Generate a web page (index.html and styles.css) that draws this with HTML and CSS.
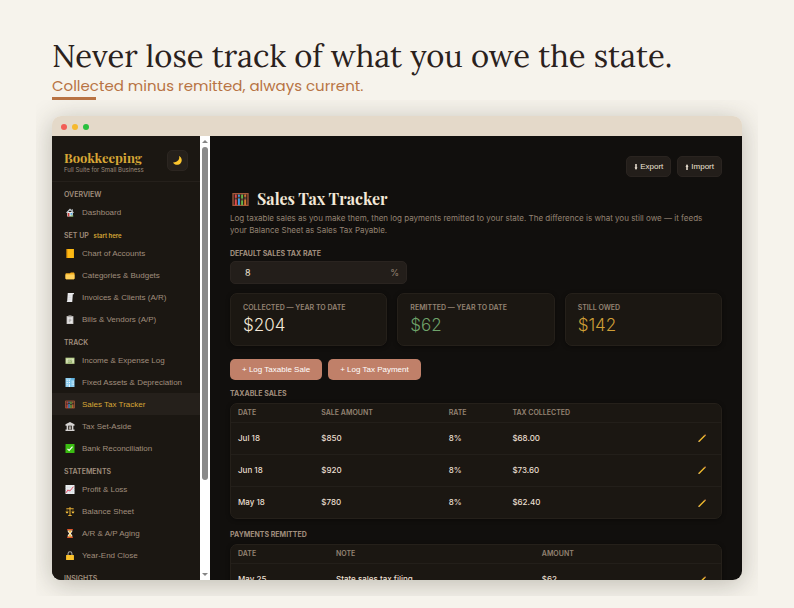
FILE: index.html
```html
<!DOCTYPE html>
<html lang="en">
<head>
    <meta charset="UTF-8">
    <meta name="viewport" content="width=device-width, initial-scale=1.0">
    <title>Sales Tax Tracker - Bookkeeping</title>
    <link rel="stylesheet" href="styles.css">
</head>
<body>
    <!-- Shared icons -->
    <svg class="sprite" aria-hidden="true">
        <symbol id="moon" viewBox="0 0 16 16"><path d="M10 1.500c2 4-1.500 9.500-8.500 9.300 2 4 8 4.700 11 1.200 3-3.500 1.800-8.500-2.500-10.500z" fill="#fcc62d"/></symbol>
        <symbol id="house" viewBox="0 0 16 16"><path d="M3 7h10v8H3z" fill="#e9edf0"/><path d="M8 1l7 7-1.500 1L8 4.500 2.500 9 1 8z" fill="#c9cfd4"/><path d="M4 9h3v6H4z" fill="#c8413b"/><path d="M9 9h3v3H9z" fill="#4ba9e0"/><path d="M11 2h2v4l-2-2z" fill="#b9c0c5"/><path d="M9 13.500h5V15H9z" fill="#69a84f"/></symbol>
        <symbol id="ledger" viewBox="0 0 16 16"><path d="M2 0h13v16H2z" fill="#fdb913"/><path d="M2 0h2v16H2z" fill="#e8990c"/></symbol>
        <symbol id="folder" viewBox="0 0 16 16"><path d="M0 13.500V5l1-1h7l1.500-1.500H15L16 4v9.500l-1 1H1z" fill="#f4ae20"/><path d="M0 6h16v7.500l-1 1H1l-1-1z" fill="#ffd15c"/></symbol>
        <symbol id="receipt" viewBox="0 0 16 16"><path d="M4 0h11v2h-2l-1 14H2l1-2z" fill="#e9e9eb"/><path d="M5.500 5h5M5.300 8h5M5 11h5" stroke="#d0d0d4" stroke-width="1"/></symbol>
        <symbol id="clipboard" viewBox="0 0 16 16"><path d="M2 2h12v14H2z" fill="#cfccc9"/><path d="M4 4h8v10H4z" fill="#eee"/><path d="M5 1h2l1-1 1 1h2v3H5z" fill="#a8a5a2"/><path d="M5.500 7.500h5M5.500 10h5M5.500 12h3" stroke="#77736f" stroke-width="1"/></symbol>
        <symbol id="cash" viewBox="0 0 16 16"><path d="M0 3h16v11H0z" fill="#b9d18b"/><path d="M1.500 5h13v7h-13z" fill="#e3ebc6"/><path d="M4 6.500h8V12H4z" fill="#86a35e"/><path d="M5.500 11V8h2v3m2 0V8H11" stroke="#e3ebc6" fill="none"/></symbol>
        <symbol id="building" viewBox="0 0 16 16"><path d="M0 0h16v16H0z" fill="#8fcff0"/><path d="M10 0h6v3h-6z" fill="#59afe0"/><path d="M2 3h2v2H2zM6 3h2v2H6zM2 7h2v2H2zM6 7h2v2H6zM2 11h2v2H2z" fill="#effaff"/><path d="M11 6h1.500v2H11zM13.500 6H15v2h-1.500zM11 10h1.500v2H11zM13.500 10H15v2h-1.500zM6 11h2v5H6z" fill="#e5f6ff"/><path d="M9.500 3v13" stroke="#59afe0"/></symbol>
        <symbol id="abacus" viewBox="0 0 18 16"><path d="M1 1.700h16v12.600H1z" fill="#342118" stroke="#a4573a" stroke-width="1.400"/><path d="M4 2v12M7.300 2v12M10.700 2v12M14 2v12" stroke="#998a80" stroke-width=".6"/><path d="M4 3v3M4 8v6" stroke="#e1484c" stroke-width="2"/><path d="M7.300 3v2M7.300 7v7" stroke="#3c9be8" stroke-width="2"/><path d="M10.700 3v4M10.700 9v5" stroke="#63b447" stroke-width="2"/><path d="M14 3v2M14 8v6" stroke="#d6782e" stroke-width="2"/></symbol>
        <symbol id="bank" viewBox="0 0 16 16"><path d="M8 0l8 4v2.500H0V4zM2 6h2.500v8H2zM11.500 6H14v8h-2.500zM0 13.500h16V16H0z" fill="#d5d3d1"/><path d="M5 7h6v6.500H5z" fill="#59534e"/><path d="M6.500 8h3v5.500h-3z" fill="#b6b2ae"/></symbol>
        <symbol id="check" viewBox="0 0 16 16"><rect width="16" height="16" rx="1" fill="#3bbd12"/><path d="M3.500 8.500l3 3 6-7" fill="none" stroke="#fff" stroke-width="2"/></symbol>
        <symbol id="chart" viewBox="0 0 16 16"><path d="M0 0h16v16H0z" fill="#eff1f3"/><path d="M4 0v16M8 0v16M12 0v16M0 4h16M0 8h16M0 12h16" stroke="#cad0d6" stroke-width=".7"/><path d="M1 14l3-5 4 1.500L14 3" fill="none" stroke="#e1445b" stroke-width="1.600"/></symbol>
        <symbol id="scales" viewBox="0 0 16 16"><path d="M8 0v15M5 15h6M1.500 3h13" stroke="#e6ae35" stroke-width="1.800"/><path d="M0 8h5.500L4 11H1.500zM10.500 8H16l-1.500 3H12z" fill="#f2bd3d"/><path d="M2.800 4v4M13.200 4v4" stroke="#aa7b22"/></symbol>
        <symbol id="hourglass" viewBox="0 0 16 16"><path d="M3 0h10v2.500H3zM3 13.500h10V16H3z" fill="#e2572c"/><path d="M4 2.500h8V5L9.500 8l2.500 3v2.500H4V11l2.500-3L4 5z" fill="#f2e9d5"/><path d="M5 3h6L8 7zM8 9l3 4.500H5z" fill="#f8b62d"/></symbol>
        <symbol id="lock" viewBox="0 0 16 16"><path d="M4.500 8V5a3.500 3.500 0 0 1 7 0v3" fill="none" stroke="#aaa9a8" stroke-width="1.800"/><rect x="1" y="7" width="14" height="9" rx="1" fill="#fbc22b"/></symbol>
        <symbol id="pencil" viewBox="0 0 16 16"><path d="M3 13.500L12.500 4" stroke="#f3bd2e" stroke-width="2.200"/><path d="M2 14.500l.7-2.200 1.500 1.500z" fill="#d9b68b"/><path d="M12.300 4.200l1.400-1.400" stroke="#e08f50" stroke-width="2.200"/></symbol>
    </svg>

    <header class="intro">
        <h1>Never lose track of what you owe the state.</h1>
        <p>Collected minus remitted, always current.</p>
        <div class="accent"></div>
    </header>

    <div class="stage">
        <div class="window">
            <div class="titlebar">
                <span class="dot red"></span>
                <span class="dot yellow"></span>
                <span class="dot green"></span>
            </div>

            <div class="app">
                <aside class="sidebar">
                    <div class="brand">
                        <div>
                            <div class="brand-name">Bookkeeping</div>
                            <div class="brand-sub">Full Suite for Small Business</div>
                        </div>
                        <button class="theme-btn" aria-label="Toggle theme"><svg><use href="#moon"/></svg></button>
                    </div>
                    <nav>
                        <h2>Overview</h2>
                        <a href="#"><svg><use href="#house"/></svg>Dashboard</a>

                        <h2>Set up <span>start here</span></h2>
                        <a href="#"><svg><use href="#ledger"/></svg>Chart of Accounts</a>
                        <a href="#"><svg><use href="#folder"/></svg>Categories &amp; Budgets</a>
                        <a href="#"><svg><use href="#receipt"/></svg>Invoices &amp; Clients (A/R)</a>
                        <a href="#"><svg><use href="#clipboard"/></svg>Bills &amp; Vendors (A/P)</a>

                        <h2>Track</h2>
                        <a href="#"><svg><use href="#cash"/></svg>Income &amp; Expense Log</a>
                        <a href="#"><svg><use href="#building"/></svg>Fixed Assets &amp; Depreciation</a>
                        <a href="#" class="active"><svg><use href="#abacus"/></svg>Sales Tax Tracker</a>
                        <a href="#"><svg><use href="#bank"/></svg>Tax Set-Aside</a>
                        <a href="#"><svg><use href="#check"/></svg>Bank Reconciliation</a>

                        <h2>Statements</h2>
                        <a href="#"><svg><use href="#chart"/></svg>Profit &amp; Loss</a>
                        <a href="#"><svg><use href="#scales"/></svg>Balance Sheet</a>
                        <a href="#"><svg><use href="#hourglass"/></svg>A/R &amp; A/P Aging</a>
                        <a href="#"><svg><use href="#lock"/></svg>Year-End Close</a>

                        <h2>Insights</h2>
                    </nav>
                </aside>

                <div class="scrollbar">
                    <svg viewBox="0 0 8 6"><path d="M4 1l4 4H0z"/></svg>
                    <div class="track"><div class="thumb"></div></div>
                    <svg viewBox="0 0 8 6"><path d="M4 5l4-4H0z"/></svg>
                </div>

                <main class="content">
                    <div class="toolbar">
                        <button class="btn-dark"><svg viewBox="0 0 4 8"><path d="M1 0h2v4.500h1L2 8 0 4.500h1z"/></svg>Export</button>
                        <button class="btn-dark"><svg viewBox="0 0 4 8"><path d="M1 8h2V3.500h1L2 0 0 3.500h1z"/></svg>Import</button>
                    </div>

                    <h2 class="page-title"><svg><use href="#abacus"/></svg>Sales Tax Tracker</h2>
                    <p class="lead">Log taxable sales as you make them, then log payments remitted to your state. The difference is what you still owe — it feeds your Balance Sheet as Sales Tax Payable.</p>

                    <label class="field-label" for="rate">Default sales tax rate</label>
                    <div class="field">
                        <input type="text" id="rate" value="8">
                        <span>%</span>
                    </div>

                    <div class="cards">
                        <div class="card">
                            <div class="card-label">Collected — year to date</div>
                            <div class="card-value">$204</div>
                        </div>
                        <div class="card">
                            <div class="card-label">Remitted — year to date</div>
                            <div class="card-value paid">$62</div>
                        </div>
                        <div class="card">
                            <div class="card-label">Still owed</div>
                            <div class="card-value owed">$142</div>
                        </div>
                    </div>

                    <div class="actions">
                        <button class="btn-accent">+ Log Taxable Sale</button>
                        <button class="btn-accent">+ Log Tax Payment</button>
                    </div>

                    <h3>Taxable sales</h3>
                    <div class="table-box">
                        <table class="sales">
                            <thead>
                                <tr><th>Date</th><th>Sale amount</th><th>Rate</th><th>Tax collected</th><th></th></tr>
                            </thead>
                            <tbody>
                                <tr><td>Jul 18</td><td>$850</td><td>8%</td><td>$68.00</td><td><button class="edit" aria-label="Edit Jul 18 sale"><svg><use href="#pencil"/></svg></button></td></tr>
                                <tr><td>Jun 18</td><td>$920</td><td>8%</td><td>$73.60</td><td><button class="edit" aria-label="Edit Jun 18 sale"><svg><use href="#pencil"/></svg></button></td></tr>
                                <tr><td>May 18</td><td>$780</td><td>8%</td><td>$62.40</td><td><button class="edit" aria-label="Edit May 18 sale"><svg><use href="#pencil"/></svg></button></td></tr>
                            </tbody>
                        </table>
                    </div>

                    <h3>Payments remitted</h3>
                    <div class="table-box">
                        <table class="payments">
                            <thead>
                                <tr><th>Date</th><th>Note</th><th>Amount</th><th></th></tr>
                            </thead>
                            <tbody>
                                <tr><td>May 25</td><td>State sales tax filing</td><td>$62</td><td><button class="edit" aria-label="Edit May 25 payment"><svg><use href="#pencil"/></svg></button></td></tr>
                            </tbody>
                        </table>
                    </div>
                </main>
            </div>
        </div>
    </div>
</body>
</html>
```
FILE: styles.css
```css
* {
    margin: 0;
    padding: 0;
    box-sizing: border-box;
}

body {
    height: 100vh;
    display: flex;
    flex-direction: column;
    background: #f6f3ec;
    font-family: Inter, sans-serif;
    overflow: hidden;
}

button {
    border: none;
    cursor: pointer;
}

.sprite {
    display: none;
}

/* Headline */
.intro {
    padding: 36px 52px 0;
}

.intro h1 {
    font-family: Lora, "Liberation Serif", serif;
    font-weight: 400;
    font-size: 31px;
    line-height: 40px;
    color: #2a211c;
    white-space: nowrap;
}

.intro p {
    margin-top: 1px;
    font-family: Poppins, "Open Sans", sans-serif;
    font-size: 15px;
    line-height: 18px;
    color: #b87344;
}

.accent {
    width: 44px;
    height: 3px;
    margin-top: 2px;
    background: #b87344;
}

/* App window */
.stage {
    flex: 1;
    min-height: 0;
    display: flex;
    margin: 0 36px 12px;
    padding: 16px;
    overflow: hidden;
}

.window {
    flex: 1;
    min-width: 0;
    display: flex;
    flex-direction: column;
    border-radius: 9px;
    overflow: hidden;
    box-shadow: 0 4px 26px rgba(60, 55, 40, 0.3);
}

.titlebar {
    flex: none;
    height: 20px;
    display: flex;
    align-items: center;
    gap: 5px;
    padding: 1px 9px 0;
    background: #e4d9c9;
}

.dot {
    width: 6px;
    height: 6px;
    border-radius: 50%;
}

.red { background: #f25e57; }
.yellow { background: #f6b92e; }
.green { background: #29c03e; }

.app {
    flex: 1;
    min-height: 0;
    display: flex;
    background: #110f0d;
}

/* Sidebar */
.sidebar {
    flex: none;
    width: 148px;
    background: #1b1712;
    overflow: hidden;
}

.brand {
    display: flex;
    justify-content: space-between;
    align-items: flex-start;
    padding: 14px 12px 6px;
    border-bottom: 1px solid #25201b;
}

.brand-name {
    font-family: "Playfair Display", "Liberation Serif", serif;
    font-weight: 700;
    font-size: 13px;
    line-height: 15px;
    color: #d8a736;
}

.brand-sub {
    font-size: 6px;
    line-height: 10px;
    color: #9c8b7c;
}

.theme-btn {
    width: 21px;
    height: 21px;
    display: grid;
    place-items: center;
    background: #25201b;
    border: 1px solid #2c2621;
    border-radius: 5px;
}

.theme-btn svg {
    width: 11px;
    height: 11px;
}

nav h2 {
    padding: 8px 12px 1px;
    font-size: 7px;
    line-height: 10px;
    font-weight: 600;
    text-transform: uppercase;
    color: #a08e7d;
}

nav h2 span {
    margin-left: 3px;
    font-size: 6px;
    text-transform: none;
    color: #d8a736;
}

nav a {
    height: 22px;
    display: flex;
    align-items: center;
    gap: 6px;
    padding: 0 12px;
    font-family: "Liberation Sans", sans-serif;
    font-size: 8px;
    color: #a08e7d;
    text-decoration: none;
    white-space: nowrap;
}

nav a svg {
    width: 12px;
    height: 9px;
}

nav a.active {
    background: #25201b;
    color: #d8a736;
}

.scrollbar {
    flex: none;
    width: 10px;
    display: flex;
    flex-direction: column;
    align-items: center;
    padding: 3px 0;
    background: #fff;
}

.scrollbar svg {
    width: 6px;
    height: 5px;
    fill: #858585;
}

.track {
    flex: 1;
    padding: 3px 0;
}

.thumb {
    width: 6px;
    height: 79%;
    border-radius: 3px;
    background: #8b8b8b;
}

/* Main panel */
.content {
    flex: 1;
    min-width: 0;
    padding: 20px 20px 0;
    overflow: hidden;
}

.toolbar {
    display: flex;
    justify-content: flex-end;
    gap: 6px;
}

.btn-dark {
    height: 21px;
    display: flex;
    align-items: center;
    gap: 2px;
    padding: 0 7px;
    font-family: "Liberation Sans", sans-serif;
    font-size: 8px;
    color: #efe5d6;
    background: #231e1a;
    border: 1px solid #2a2420;
    border-radius: 5px;
}

.btn-dark svg {
    width: 4px;
    height: 6px;
    fill: #efe5d6;
}

.page-title {
    display: flex;
    align-items: center;
    gap: 6px;
    margin-top: 11px;
    font-family: "Playfair Display", "Liberation Serif", serif;
    font-weight: 700;
    font-size: 16px;
    line-height: 22px;
    color: #f3e8d8;
}

.page-title svg {
    width: 21px;
    height: 15px;
}

.lead {
    margin-top: 2px;
    padding-right: 4px;
    font-size: 8px;
    line-height: 12px;
    color: #948373;
}

.field-label,
.content h3 {
    display: block;
    font-size: 7px;
    line-height: 10px;
    font-weight: 700;
    text-transform: uppercase;
    color: #a08e7d;
}

.field-label {
    margin-top: 13px;
}

.field {
    width: 36%;
    height: 23px;
    display: flex;
    align-items: center;
    margin-top: 2px;
    padding: 0 7px 0 14px;
    background: #231e1a;
    border: 1px solid #2a2420;
    border-radius: 5px;
}

.field input {
    flex: 1;
    min-width: 0;
    font-family: inherit;
    font-size: 9px;
    color: #efe5d6;
    background: none;
    border: none;
    outline: none;
}

.field span {
    font-size: 9px;
    color: #948373;
}

.cards {
    display: grid;
    grid-template-columns: repeat(3, 1fr);
    gap: 10px;
    margin-top: 9px;
}

.card {
    padding: 9px 12px 10px;
    background: #1b1712;
    border: 1px solid #25201a;
    border-radius: 7px;
    box-shadow: 0 1px 4px rgba(0, 0, 0, 0.4);
}

.card-label {
    font-size: 7px;
    line-height: 10px;
    font-weight: 600;
    text-transform: uppercase;
    color: #948373;
}

.card-value {
    margin-top: 2px;
    font-size: 17px;
    line-height: 20px;
    font-weight: 300;
    color: #f3e8d8;
}

.card-value.paid { color: #6fa36a; }
.card-value.owed { color: #cf9f37; }

.actions {
    display: flex;
    gap: 6px;
    margin-top: 13px;
}

.btn-accent {
    height: 21px;
    padding: 0 12px;
    font-family: "Liberation Sans", sans-serif;
    font-size: 8px;
    color: #fff;
    background: #c08069;
    border-radius: 5px;
}

.content h3 {
    margin: 9px 0 4px;
}

.table-box {
    background: #1b1712;
    border: 1px solid #25201a;
    border-radius: 7px;
    box-shadow: 0 1px 4px rgba(0, 0, 0, 0.4);
    overflow: hidden;
}

.content .table-box + h3 {
    margin-top: 11px;
}

table {
    width: 100%;
    table-layout: fixed;
    border-collapse: collapse;
}

th,
td {
    padding: 0 7px;
    text-align: left;
    white-space: nowrap;
}

th {
    height: 18px;
    font-size: 7px;
    font-weight: 600;
    text-transform: uppercase;
    color: #948373;
}

td {
    height: 32px;
    font-size: 8px;
    font-weight: 500;
    color: #e9dfd0;
    border-top: 1px solid #231f1a;
}

.sales th:nth-child(1) { width: 17%; }
.sales th:nth-child(2) { width: 26%; }
.sales th:nth-child(3) { width: 13%; }
.sales th:nth-child(4) { width: 34%; }

.payments th:nth-child(1) { width: 20%; }
.payments th:nth-child(2) { width: 42%; }
.payments th:nth-child(3) { width: 28%; }

td:last-child {
    padding-right: 14px;
    text-align: right;
}

.edit {
    background: none;
    vertical-align: middle;
}

.edit svg {
    display: block;
    width: 10px;
    height: 10px;
}
```
